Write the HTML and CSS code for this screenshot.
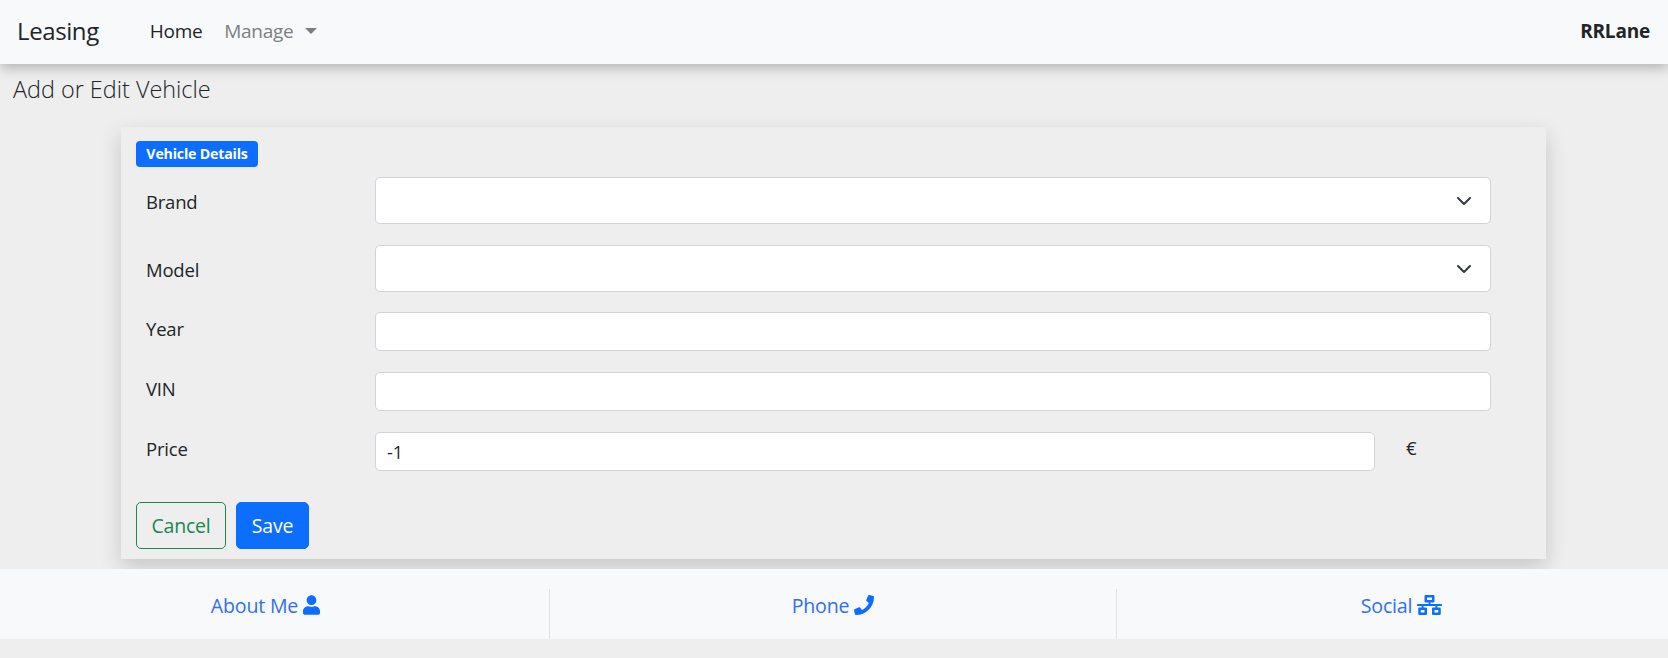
FILE: index.html
```html
<!DOCTYPE html>
<html lang="en">
<head>
<meta charset="utf-8">
<title>Leasing</title>
<link rel="stylesheet" href="styles.css">
</head>
<body>
<nav class="navbar">
  <a class="brand" href="#">Leasing</a>
  <a class="nav-link active" href="#">Home</a>
  <a class="nav-link" href="#">Manage<span class="caret"></span></a>
  <span class="user">RRLane</span>
</nav>
<main class="content">
  <h1 class="title">Add or Edit Vehicle</h1>
  <form class="card">
    <div class="legend"><span class="badge">Vehicle Details</span></div>
    <div class="row row-select">
      <label class="label">Brand</label>
      <select class="control select"><option></option></select>
    </div>
    <div class="row row-select">
      <label class="label">Model</label>
      <select class="control select"><option></option></select>
    </div>
    <div class="row">
      <label class="label">Year</label>
      <input class="control" type="text">
    </div>
    <div class="row">
      <label class="label">VIN</label>
      <input class="control" type="text">
    </div>
    <div class="row row-price">
      <label class="label">Price</label>
      <input class="control" type="text" value="-1">
      <span class="unit">€</span>
    </div>
    <div class="actions">
      <button class="btn btn-outline" type="button">Cancel</button>
      <button class="btn btn-primary" type="button">Save</button>
    </div>
  </form>
</main>
<footer class="footer">
  <div class="foot-col foot-a">
    <a href="#">About Me</a>
    <svg class="icon icon-user" viewBox="0 0 448 512"><path d="M224 256c70.7 0 128-57.3 128-128S294.7 0 224 0 96 57.3 96 128s57.3 128 128 128zm89.6 32h-16.7c-22.2 10.2-46.9 16-72.9 16s-50.6-5.8-72.9-16h-16.7C60.2 288 0 348.2 0 422.4V464c0 26.5 21.5 48 48 48h352c26.5 0 48-21.5 48-48v-41.6c0-74.2-60.2-134.4-134.4-134.4z"/></svg>
  </div>
  <div class="foot-col foot-b">
    <a href="#">Phone</a>
    <svg class="icon icon-phone" viewBox="0 0 512 512"><path d="M493.4 24.6l-104-24c-11.3-2.6-22.9 3.2-27.5 13.9l-48 112c-4.2 9.8-1.4 21.3 6.9 28l60.6 49.6c-36 76.7-98.9 140.5-177.2 177.2l-49.6-60.6c-6.8-8.3-18.2-11.1-28-6.9l-112 48C3.9 366.5-2 378.1.6 389.4l24 104C27.1 504.2 36.7 512 48 512c256.1 0 464-207.5 464-464 0-11.2-7.7-20.9-18.6-23.4z"/></svg>
  </div>
  <div class="foot-col foot-c">
    <a href="#">Social</a>
    <svg class="icon icon-net" viewBox="0 0 640 512"><path d="M640 264v-16c0-8.84-7.16-16-16-16H344v-40h72c17.67 0 32-14.33 32-32V32c0-17.67-14.33-32-32-32H224c-17.67 0-32 14.33-32 32v128c0 17.67 14.33 32 32 32h72v40H16c-8.84 0-16 7.16-16 16v16c0 8.84 7.16 16 16 16h104v40H64c-17.67 0-32 14.33-32 32v128c0 17.67 14.33 32 32 32h160c17.67 0 32-14.33 32-32V352c0-17.67-14.33-32-32-32h-56v-40h304v40h-56c-17.67 0-32 14.33-32 32v128c0 17.67 14.33 32 32 32h160c17.67 0 32-14.33 32-32V352c0-17.67-14.33-32-32-32h-56v-40h104c8.84 0 16-7.16 16-16zM256 128V64h128v64H256zm-64 320H96v-64h96v64zm352 0h-96v-64h96v64z"/></svg>
  </div>
</footer>
</body>
</html>
```
FILE: styles.css
```css
* { box-sizing: border-box; }
html, body { margin: 0; height: 100%; }
body {
  background: #eeeeee;
  color: #212529;
  font-family: "Open Sans", "Noto Sans", sans-serif;
  font-size: 18.5px;
  overflow: hidden;
}
a { text-decoration: none; }

.navbar {
  height: 64px;
  background: #f8f9fa;
  display: flex;
  align-items: center;
  padding: 0 18px 3px 17px;
  box-shadow: 0 4px 12px rgba(0, 0, 0, 0.25);
  position: relative;
}
.brand { font-size: 24px; color: #212529; margin-right: 51px; letter-spacing: -0.4px; }
.nav-link { font-size: 19px; color: #7b7f84; letter-spacing: -0.3px; }
.nav-link.active { color: #212529; margin-right: 22px; }
.caret {
  display: inline-block;
  margin-left: 12px;
  vertical-align: 4px;
  border-top: 6px solid #7b7f84;
  border-left: 6px solid transparent;
  border-right: 6px solid transparent;
}
.user { margin-left: auto; font-weight: 700; font-size: 19px; color: #212529; letter-spacing: -0.2px; }

.title {
  margin: 0;
  padding: 8px 0 0 13px;
  height: 63px;
  font-size: 23.4px;
  font-weight: 300;
  line-height: 34px;
  color: #212529;
}
.card {
  width: 1425px;
  height: 432px;
  margin-left: 121px;
  background: #eeeeee;
  padding: 14px 15px 0;
  box-shadow: 0 8px 20px rgba(0, 0, 0, 0.17);
}
.legend { height: 26px; display: flex; }
.badge {
  width: 122px;
  background: #0d6efd;
  color: #fff;
  font-size: 14.2px;
  font-weight: 700;
  line-height: 26px;
  text-align: center;
  border-radius: 4px;
  letter-spacing: -0.2px;
}
.row {
  display: grid;
  grid-template-columns: 239px 1116px;
  margin-top: 21px;
  height: 39px;
}
.row-select { height: 47px; margin-top: 10px; }
.row-select + .row-select { margin-top: 21px; }
.row-select + .row:not(.row-select) { margin-top: 20px; }
.row-price { grid-template-columns: 239px 1000px auto; }
.label { padding: 5px 0 0 10px; line-height: 24px; letter-spacing: -0.2px; }
.row-select .label { padding-top: 13px; }
.control {
  width: 100%;
  height: 100%;
  border: 1px solid #ced4da;
  border-radius: 5px;
  background-color: #fff;
  padding: 0 11px;
  font: inherit;
  font-size: 18px;
  color: #212529;
}
.select {
  appearance: none;
  -webkit-appearance: none;
  background-image: url("data:image/svg+xml,%3csvg xmlns='http://www.w3.org/2000/svg' viewBox='0 0 16 16'%3e%3cpath fill='none' stroke='%23343a40' stroke-linecap='round' stroke-linejoin='round' stroke-width='2' d='M2 5l6 6 6-6'/%3e%3c/svg%3e");
  background-repeat: no-repeat;
  background-position: right 18px center;
  background-size: 16px 16px;
}
.unit { padding: 4px 0 0 31px; line-height: 24px; }
.actions { display: flex; gap: 10px; margin-top: 31px; }
.btn {
  height: 47px;
  font: inherit;
  font-size: 19.5px;
  border-radius: 5px;
  padding: 0;
  letter-spacing: -0.2px;
}
.btn-outline { width: 90px; background: transparent; border: 1px solid #198754; color: #198754; }
.btn-primary { width: 73px; background: #0d6efd; border: 1px solid #0d6efd; color: #fff; }

.footer {
  margin-top: 10px;
  height: 70px;
  background: #f8f9fa;
  display: grid;
  grid-template-columns: 549px 567px 1fr;
  padding-top: 20px;
}
.foot-col {
  display: flex;
  align-items: center;
  justify-content: center;
  gap: 5px;
  height: 50px;
  padding-bottom: 18px;
  font-size: 19.6px;
  letter-spacing: -0.2px;
}
.foot-a { padding-right: 18px; }
.foot-b { border-left: 1px solid #dee2e6; }
.foot-c { border-left: 1px solid #dee2e6; padding-left: 18px; }
.foot-col a { color: #2f6ff5; }
.icon { fill: #0d6efd; display: block; height: 20px; }
.icon-user { width: 17px; }
.icon-phone { width: 20px; }
.icon-net { width: 25px; }
```
